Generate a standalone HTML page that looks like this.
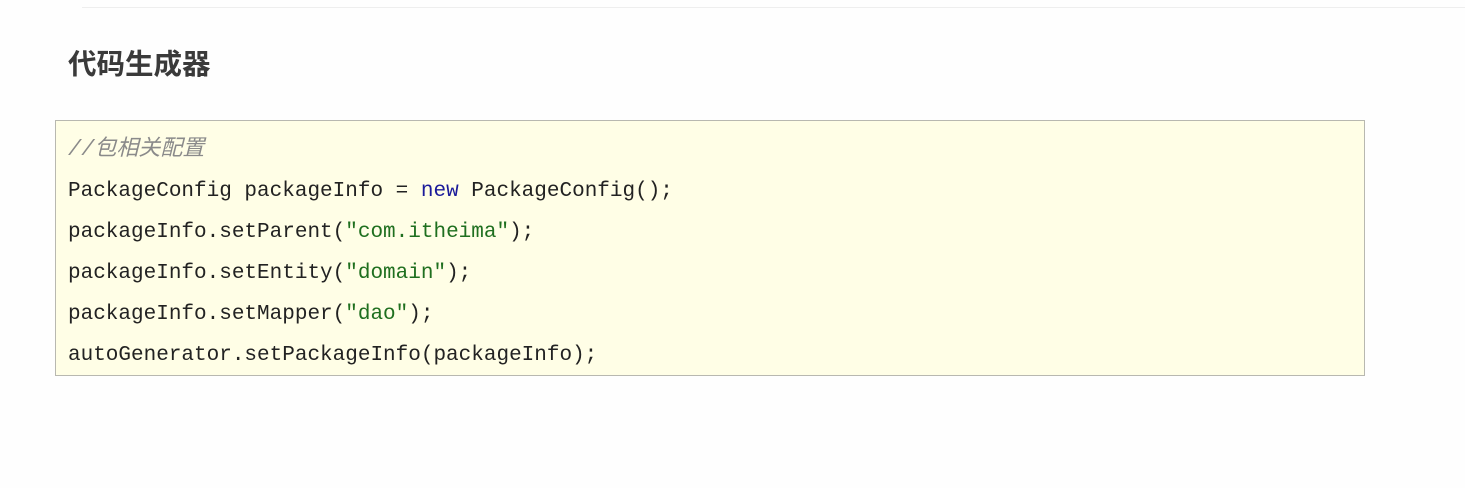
<!DOCTYPE html>
<html><head><meta charset="utf-8"><style>
body{margin:0;width:1465px;height:488px;background:#fefefe;position:relative;overflow:hidden;font-family:"Liberation Sans","Noto Sans CJK SC",sans-serif}
.topline{position:absolute;left:82px;right:0;top:7px;height:1px;background:#eeeeee}
h1{position:absolute;left:68px;top:43px;margin:0;font-size:28.5px;font-weight:bold;color:#3a3a3a;line-height:40px;font-family:"Noto Sans CJK SC",sans-serif}
.box{position:absolute;left:55px;top:120px;width:1308px;height:254px;border:1px solid #b8b8b0;background:#fffee6}
.l{position:absolute;left:12px;font-family:"Liberation Mono","Noto Sans CJK SC",monospace;font-size:21px;line-height:30px;color:#222;white-space:pre}
.c{color:#8a8a8a;font-style:italic;font-size:22px}
.k{color:#1a1a9a}.s{color:#1f6f1f}
</style></head><body>
<div class="topline"></div>
<h1>代码生成器</h1>
<div class="box">
<div class="l c" style="top:14px">//包相关配置</div>
<div class="l" style="top:56px">PackageConfig packageInfo = <span class="k">new</span> PackageConfig();</div>
<div class="l" style="top:97px">packageInfo.setParent(<span class="s">"com.itheima"</span>);</div>
<div class="l" style="top:138px">packageInfo.setEntity(<span class="s">"domain"</span>);</div>
<div class="l" style="top:179px">packageInfo.setMapper(<span class="s">"dao"</span>);</div>
<div class="l" style="top:220px">autoGenerator.setPackageInfo(packageInfo);</div>
</div>
</body></html>
